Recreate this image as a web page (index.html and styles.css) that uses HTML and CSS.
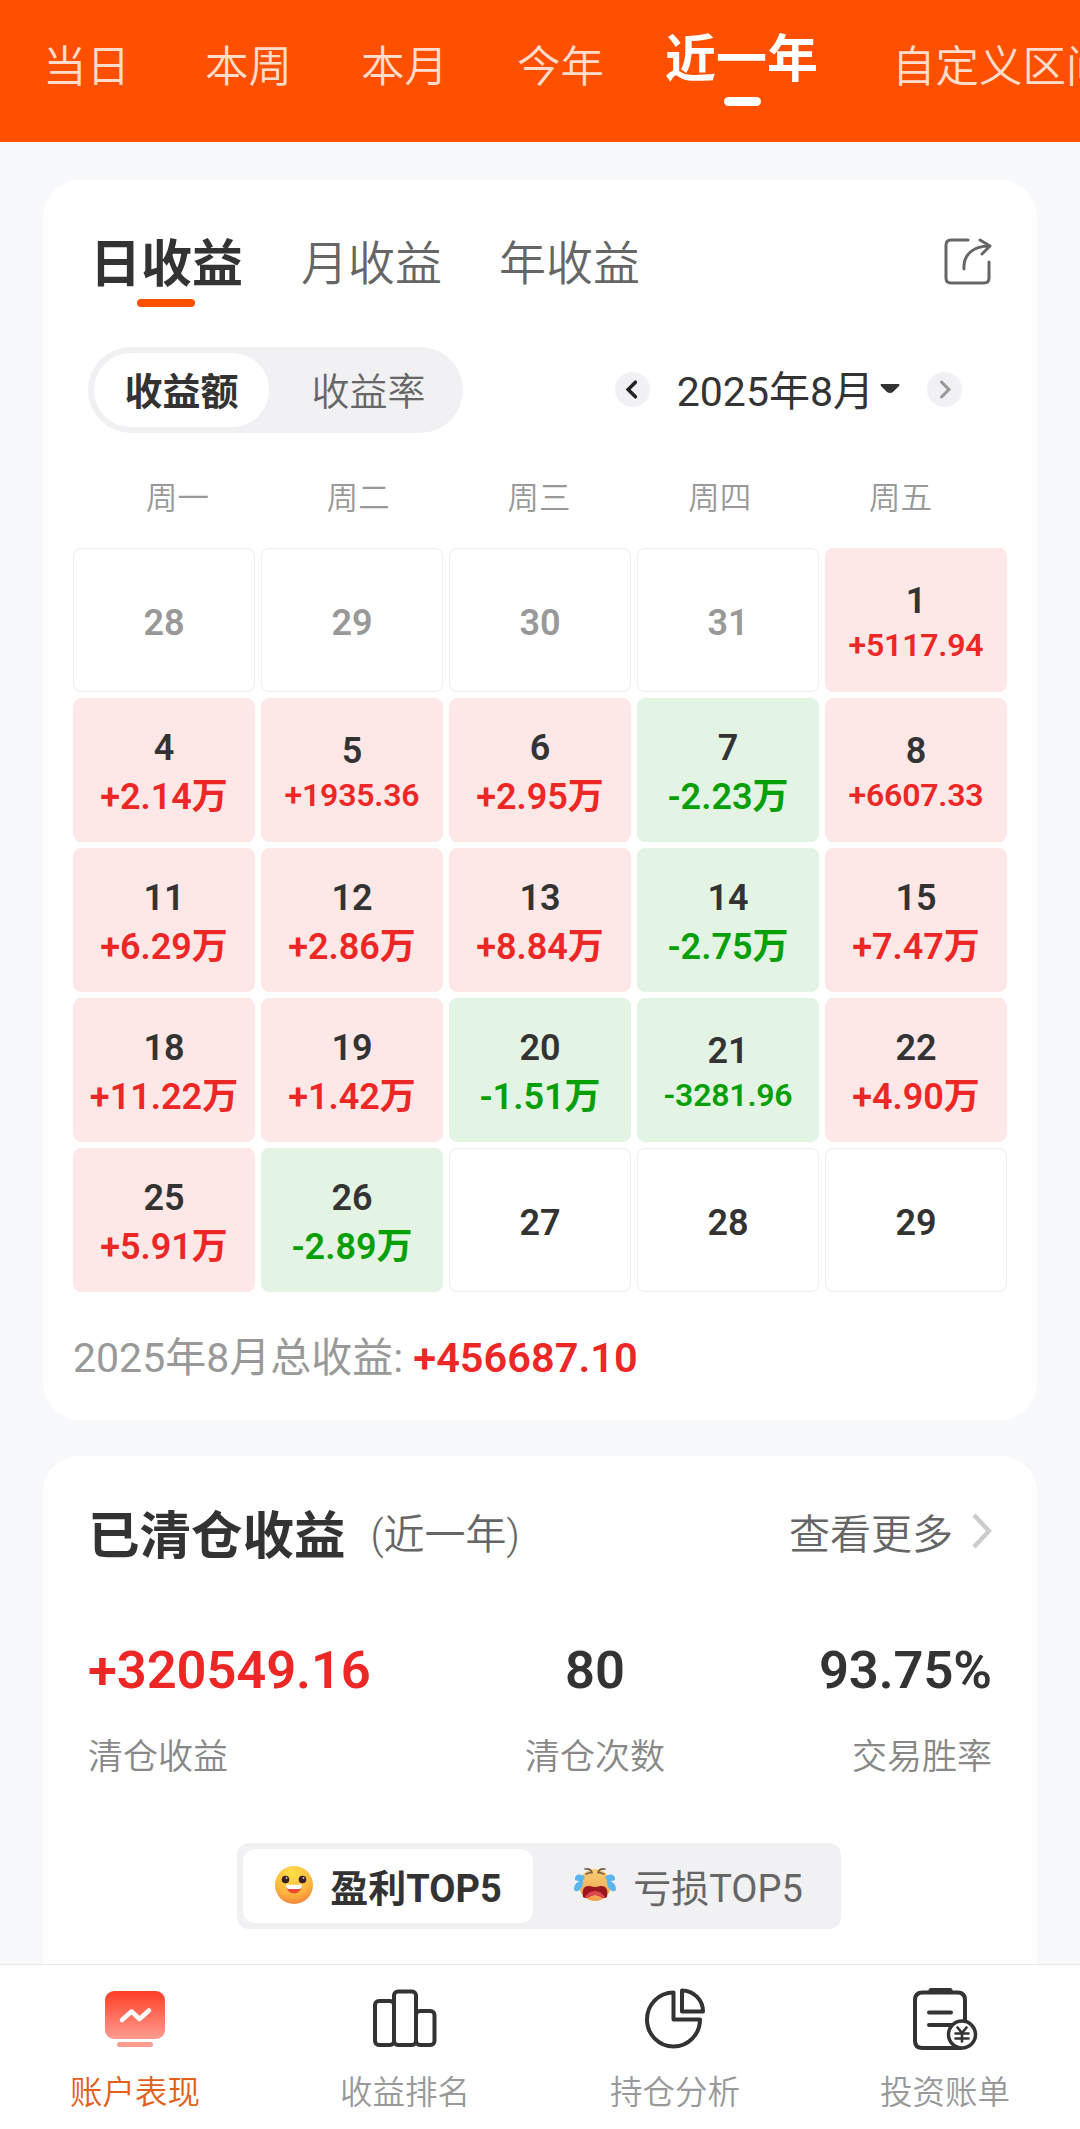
FILE: index.html
```html
<!DOCTYPE html>
<html lang="zh-CN">
<head>
    <meta charset="UTF-8">
    <meta name="viewport" content="width=device-width, initial-scale=1.0">
    <title>账户表现</title>
    <link rel="stylesheet" href="styles.css">
</head>
<body>
    <nav class="range-tabs">
        <a>当日</a>
        <a>本周</a>
        <a>本月</a>
        <a>今年</a>
        <a class="active">近一年</a>
        <a>自定义区间</a>
    </nav>

    <main>
        <section class="card calendar-card">
            <div class="card-tabs">
                <a class="active">日收益</a>
                <a>月收益</a>
                <a>年收益</a>
                <svg class="share" viewBox="0 0 48 48" fill="none" stroke="#666" stroke-width="3" stroke-linecap="round" stroke-linejoin="round">
                    <path d="M24 2H7Q2 2 2 7V40Q2 45 7 45H40Q45 45 45 40V24"/>
                    <path d="M20 31C19 17 29 8 45 8M36 2L46 8L38 16"/>
                </svg>
            </div>

            <div class="controls">
                <div class="pill">
                    <span class="active">收益额</span>
                    <span>收益率</span>
                </div>
                <div class="month">
                    <span class="arrow">
                        <svg viewBox="0 0 36 36" fill="none" stroke="#222" stroke-width="3.600" stroke-linecap="round"><path d="M21 10.500L13.500 18L21 25.500"/></svg>
                    </span>
                    <span class="month-name">2025年8月</span>
                    <svg class="caret" viewBox="0 0 20 10"><path d="M1 0H19Q20 1 19 2L13 8Q10 10 7 8L1 2Q0 1 1 0Z" fill="#333"/></svg>
                    <span class="arrow">
                        <svg viewBox="0 0 36 36" fill="none" stroke="#999" stroke-width="3.200" stroke-linecap="round"><path d="M15 10.500L22.500 18L15 25.500"/></svg>
                    </span>
                </div>
            </div>

            <div class="weekdays">
                <span>周一</span><span>周二</span><span>周三</span><span>周四</span><span>周五</span>
            </div>

            <div class="days">
                <div class="day other">28</div>
                <div class="day other">29</div>
                <div class="day other">30</div>
                <div class="day other">31</div>
                <div class="day up">1<small>+5117.94</small></div>

                <div class="day up">4<b>+2.14万</b></div>
                <div class="day up">5<small>+1935.36</small></div>
                <div class="day up">6<b>+2.95万</b></div>
                <div class="day down">7<b>-2.23万</b></div>
                <div class="day up">8<small>+6607.33</small></div>

                <div class="day up">11<b>+6.29万</b></div>
                <div class="day up">12<b>+2.86万</b></div>
                <div class="day up">13<b>+8.84万</b></div>
                <div class="day down">14<b>-2.75万</b></div>
                <div class="day up">15<b>+7.47万</b></div>

                <div class="day up">18<b>+11.22万</b></div>
                <div class="day up">19<b>+1.42万</b></div>
                <div class="day down">20<b>-1.51万</b></div>
                <div class="day down">21<small>-3281.96</small></div>
                <div class="day up">22<b>+4.90万</b></div>

                <div class="day up">25<b>+5.91万</b></div>
                <div class="day down">26<b>-2.89万</b></div>
                <div class="day">27</div>
                <div class="day">28</div>
                <div class="day">29</div>
            </div>

            <p class="total">2025年8月总收益: <strong>+456687.10</strong></p>
        </section>

        <section class="card cleared-card">
            <div class="cleared-head">
                <h2>已清仓收益</h2>
                <span class="period">(近一年)</span>
                <a class="more">查看更多
                    <svg viewBox="0 0 20 36" fill="none" stroke="#ccc" stroke-width="4.500"><path d="M2 2L17 18L2 34"/></svg>
                </a>
            </div>

            <div class="stats">
                <div class="stat">
                    <strong class="red">+320549.16</strong>
                    <span>清仓收益</span>
                </div>
                <div class="stat">
                    <strong>80</strong>
                    <span>清仓次数</span>
                </div>
                <div class="stat">
                    <strong>93.75%</strong>
                    <span>交易胜率</span>
                </div>
            </div>

            <div class="top-switch">
                <span class="active">
                    <svg class="face" viewBox="0 0 40 40">
                        <defs>
                            <radialGradient id="happy" cx="45%" cy="20%" r="85%">
                                <stop offset="0" stop-color="#ffe04a"/>
                                <stop offset="0.600" stop-color="#fdb93f"/>
                                <stop offset="1" stop-color="#f4803a"/>
                            </radialGradient>
                        </defs>
                        <circle cx="20" cy="20" r="19" fill="url(#happy)"/>
                        <circle cx="11.500" cy="14.500" r="3.800" fill="#3a2020"/>
                        <circle cx="28.500" cy="14.500" r="3.800" fill="#3a2020"/>
                        <circle cx="12.500" cy="13" r="0.900" fill="#ccc"/>
                        <circle cx="29.500" cy="13" r="0.900" fill="#ccc"/>
                        <path d="M12 20Q20 21 28 20Q27 28.500 20 28.500Q13 28.500 12 20Z" fill="#ee4b35"/>
                        <path d="M12 19.500Q20 20 28 19.500Q28 24 25 24H15Q12 24 12 19.500Z" fill="#fff"/>
                    </svg>
                    盈利TOP5
                </span>
                <span>
                    <svg class="face cry" viewBox="0 0 44 36">
                        <defs>
                            <linearGradient id="sad" x2="0" y2="1">
                                <stop offset="0" stop-color="#f6cf76"/>
                                <stop offset="1" stop-color="#f2a04a"/>
                            </linearGradient>
                        </defs>
                        <circle cx="22" cy="18" r="16" fill="url(#sad)"/>
                        <path d="M12 2Q18 1 19 6M13 7L19 5M32 2Q26 1 25 6M31 7L25 5" fill="none" stroke="#7d5a4a" stroke-width="1.600" stroke-linecap="round"/>
                        <path d="M10 30Q8 18 17 19Q22 21 27 19Q36 18 34 30Q32 32 28 30Q22 26 16 30Q12 32 10 30Z" fill="#9c1620"/>
                        <path d="M12 30Q16 24 22 24Q28 24 32 30Q30 32 28 30Q22 26 16 30Q13 32 12 30Z" fill="#dd4651"/>
                        <path d="M2 11Q3 6 9 8Q14 10 10 13Q6 15 2 13ZM1 22Q1 15 10 13Q11 20 5 24Q1 25 1 22ZM42 11Q41 6 35 8Q30 10 34 13Q38 15 42 13ZM43 22Q43 15 34 13Q33 20 39 24Q43 25 43 22Z" fill="#5ab6ef"/>
                    </svg>
                    亏损TOP5
                </span>
            </div>
        </section>
    </main>

    <footer class="tabbar">
        <a class="active">
            <svg viewBox="0 0 66 66">
                <defs>
                    <linearGradient id="screen" x2="0" y2="1">
                        <stop offset="0" stop-color="#ff3f26"/>
                        <stop offset="1" stop-color="#ff9c90"/>
                    </linearGradient>
                </defs>
                <rect x="3" y="5" width="60" height="48" rx="9" fill="url(#screen)"/>
                <path d="M20 34L29.500 25.500L37.500 33L47 24.500" fill="none" stroke="#fff" stroke-width="4.500" stroke-linecap="round" stroke-linejoin="round"/>
                <rect x="15" y="56" width="36" height="5" rx="2.500" fill="#ff9c90"/>
            </svg>
            账户表现
        </a>
        <a>
            <svg viewBox="0 0 66 66" fill="none" stroke="#333" stroke-width="4">
                <rect x="3" y="15" width="19" height="44" rx="4"/>
                <rect x="22" y="5.500" width="22" height="53.500" rx="4"/>
                <rect x="44" y="25" width="18.500" height="34" rx="4"/>
            </svg>
            收益排名
        </a>
        <a>
            <svg viewBox="0 0 66 66" fill="none" stroke="#333" stroke-width="4" stroke-linejoin="round">
                <path d="M31.500 6.500A26.500 27 0 1 0 58 33.500H31.500Z"/>
                <path d="M40 4.500V25.500H61A21 21 0 0 0 40 4.500Z"/>
            </svg>
            持仓分析
        </a>
        <a>
            <svg viewBox="0 0 66 66" fill="none" stroke="#333" stroke-width="4" stroke-linecap="round">
                <path d="M53 34V14Q53 6.500 45.500 6.500H10.500Q3 6.500 3 14V55Q3 62 10.500 62H49"/>
                <path d="M19 4.500H38" stroke-width="5"/>
                <path d="M17 26.500H39M17 39H41"/>
                <circle cx="50" cy="48.500" r="13.500" fill="#fff" stroke-width="3.500"/>
                <path d="M45.500 41.500L50 47L54.500 41.500M50 47V55.500M43.500 47.500H56.500M43.500 52.500H56.500" stroke-width="2.600"/>
            </svg>
            投资账单
        </a>
    </footer>
</body>
</html>
```

FILE: styles.css
```css
* { box-sizing: border-box; }
body { margin: 0; height: 2129px; overflow: hidden; display: flex; flex-direction: column; background: #f7f8fa; color: #333; font-family: Roboto, "Noto Sans CJK SC", sans-serif; }
svg { display: block; flex-shrink: 0; }

.range-tabs { height: 142px; flex-shrink: 0; display: flex; padding-left: 43px; background: #ff5000; white-space: nowrap; overflow: hidden; }
.range-tabs a { height: 130px; line-height: 135px; margin-right: 69px; font-size: 43.5px; font-weight: 350; color: #ffdccb; flex-shrink: 0; }
.range-tabs a:first-child { margin-right: 75px; }
.range-tabs a:nth-child(4) { margin-right: 61px; }
.range-tabs .active { position: relative; margin-right: 74px; line-height: 120px; font-size: 51px; font-weight: 700; color: #fff; }
.range-tabs .active::after { content: ""; position: absolute; left: 50%; top: 97px; width: 37px; height: 9px; margin-left: -18px; border-radius: 5px; background: #fff; }

main { flex: 1; min-height: 0; overflow: hidden; padding: 38px 43px 0; }
.card { background: #fff; border-radius: 36px; }
.calendar-card { height: 1240px; padding: 48px 30px 0; }
.cleared-card { height: 600px; margin-top: 36px; padding: 39px 45px 0; }

.card-tabs { display: flex; padding: 0 15px 0 17px; height: 119px; line-height: 72px; }
.card-tabs a { margin-right: 58px; font-size: 47px; font-weight: 350; color: #666; }
.card-tabs a:nth-child(2) { margin-right: 57px; }
.card-tabs .active { position: relative; height: 80px; font-size: 51px; line-height: 74px; font-weight: 700; color: #333; }
.card-tabs .active::after { content: ""; position: absolute; left: 47px; top: 71px; width: 58px; height: 8px; border-radius: 4px; background: #ff5000; }
.share { width: 48px; height: 48px; margin: 10px 0 0 auto; }

.controls { display: flex; justify-content: space-between; padding: 0 45px 0 15px; }
.pill { display: flex; width: 375px; height: 86px; padding: 6px; border-radius: 43px; background: #f1f1f4; }
.pill span { width: 175px; border-radius: 37px; text-align: center; font-size: 38px; line-height: 79px; font-weight: 350; color: #666; }
.pill span + span { margin-left: 12px; }
.pill .active { background: #fff; color: #333; font-weight: 700; }
.month { display: flex; align-items: center; height: 84px; }
.arrow { width: 35px; height: 35px; border-radius: 50%; background: #f1f1f4; }
.month-name { margin: -2px 6px 0 27px; font-size: 41px; font-weight: 400; }
.caret { width: 20px; height: 10px; margin-right: 27px; }

.weekdays { display: grid; grid-template-columns: repeat(5, 1fr); margin: 42px 16px 0 14px; height: 73px; line-height: 48px; text-align: center; font-size: 31.5px; font-weight: 350; color: #999; }
.days { display: grid; grid-template-columns: repeat(5, 182px); grid-auto-rows: 144px; gap: 6px; }
.day { display: flex; flex-direction: column; align-items: center; justify-content: center; padding-top: 6px; border: 1px solid #eee; border-radius: 8px; font-size: 36px; line-height: 49px; font-weight: 600; }
.day b { font-weight: 600; }
.day small { margin: -2px 0 3px; font-size: 32px; line-height: 42px; letter-spacing: -0.2px; font-weight: 600; }
.other { color: #999; }
.up { background: #fde8e7; border-color: #fde8e7; }
.up b, .up small, .red, .total strong { color: #ed2626; }
.down { background: #e3f4e4; border-color: #e3f4e4; }
.down b, .down small { color: #06a006; }
.total { margin: 36px 0 0; font-size: 41px; line-height: 60px; font-weight: 400; color: #999; }
.total strong { font-size: 41.5px; font-weight: 600; }

.cleared-head { display: flex; align-items: center; height: 72px; }
h2 { margin: 0 25px 0 0; font-size: 51.5px; font-weight: 700; }
.period { font-size: 41px; font-weight: 350; color: #666; }
.more { display: flex; align-items: center; gap: 19px; margin-left: auto; font-size: 41px; font-weight: 350; color: #666; }
.more svg { width: 20px; height: 36px; }

.stats { display: flex; justify-content: space-between; margin-top: 68px; }
.stat { display: flex; flex-direction: column; align-items: center; }
.stat:first-child { width: 332px; align-items: flex-start; }
.stat:nth-child(2) { width: 350px; }
.stat:last-child { width: 222px; align-items: flex-end; }
.stat strong { font-size: 52.5px; line-height: 70px; font-weight: 600; letter-spacing: -0.1px; }
.stat span { margin-top: 27px; font-size: 35px; line-height: 52px; font-weight: 350; color: #888; }

.top-switch { display: flex; width: 604px; height: 86px; margin: 59px 0 0 149px; padding: 6px; border-radius: 12px; background: #f1f1f4; }
.top-switch span { display: flex; align-items: center; justify-content: center; width: 290px; padding-bottom: 2px; border-radius: 12px; font-size: 38px; font-weight: 400; color: #666; }
.top-switch span + span { margin-left: 10px; }
.top-switch .active { background: #fff; color: #333; font-weight: 700; }
.face { width: 40px; height: 40px; margin-right: 16px; }
.cry { width: 44px; height: 36px; }

.tabbar { display: flex; height: 165px; flex-shrink: 0; background: #fff; border-top: 1px solid #ebebed; }
.tabbar a { flex: 1; display: flex; flex-direction: column; align-items: center; padding-top: 21px; font-size: 32.5px; line-height: 48px; font-weight: 350; color: #999; }
.tabbar svg { width: 66px; height: 66px; margin-bottom: 17px; }
.tabbar .active { color: #e2601a; }
```
